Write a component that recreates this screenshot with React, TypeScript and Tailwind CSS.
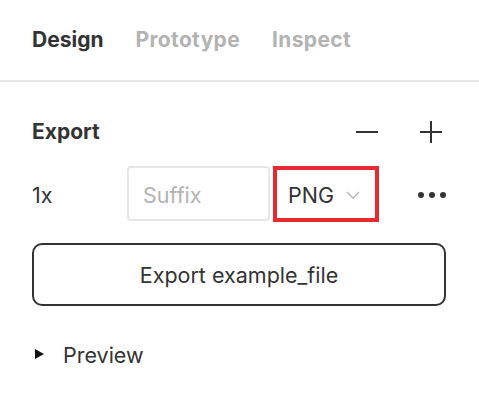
import React from 'react';

const font = { fontFamily: 'Inter, "Liberation Sans", sans-serif' };

function Minus() {
  return (
    <svg width="22" height="22" viewBox="0 0 22 22" className="text-[#333]">
      <path d="M0 11h22" stroke="currentColor" strokeWidth="2" />
    </svg>
  );
}

function Plus() {
  return (
    <svg width="22" height="22" viewBox="0 0 22 22" className="text-[#333]">
      <path d="M0 11h22M11 0v22" stroke="currentColor" strokeWidth="2" />
    </svg>
  );
}

function Chevron() {
  return (
    <svg width="14" height="8" viewBox="0 0 14 8" className="text-[#b3b3b3]">
      <path d="M1 1l6 6 6-6" fill="none" stroke="currentColor" strokeWidth="1.3" />
    </svg>
  );
}

function App() {
  return (
    <div className="h-[404px] w-[479px] bg-white text-[#333]" style={font}>
      <div className="flex h-[82px] items-center gap-[32px] border-b-2 border-[#e6e6e6] pl-[32px] text-[21px] font-bold">
        <span className="text-[#333]">Design</span>
        <span className="tracking-[0.35px] text-[#b3b3b3]">Prototype</span>
        <span className="tracking-[0.35px] text-[#b3b3b3]">Inspect</span>
      </div>

      <div className="pl-[32px] pr-[33px]">
        <div className="mt-[28px] flex h-[44px] items-center justify-between pr-[4px]">
          <span className="text-[21px] font-bold">Export</span>
          <div className="flex items-center gap-[42px]">
            <Minus />
            <Plus />
          </div>
        </div>

        <div className="mt-[12px] flex h-[55px] items-center text-[21.5px]">
          <span className="w-[95px] pt-[3px]">1x</span>
          <div className="flex h-[55px] w-[143px] items-center rounded-[4px] border-2 border-[#e6e6e6] pl-[14px] pt-[3px] text-[#b3b3b3]">
            Suffix
          </div>
          <div className="ml-[3px] flex h-[56px] w-[106px] items-center border-4 border-[#e8292f] pl-[11px]">
            <span className="pt-[3px]">PNG</span>
            <span className="ml-[12px] flex items-center pt-[2px]">
              <Chevron />
            </span>
          </div>
          <div className="ml-auto flex items-center gap-[5px] pt-[2px]">
            <span className="h-[6px] w-[6px] rounded-full bg-[#333]" />
            <span className="h-[6px] w-[6px] rounded-full bg-[#333]" />
            <span className="h-[6px] w-[6px] rounded-full bg-[#333]" />
          </div>
        </div>

        <button
          type="button"
          className="mt-[22px] flex h-[63px] w-[414px] items-center justify-center rounded-[10px] border-2 border-[#333] pt-[2px] text-[21.5px]"
        >
          Export example_file
        </button>

        <div className="mt-[33px] flex h-[30px] items-center">
          <svg width="9" height="10" viewBox="0 0 9 10" className="ml-[3px]">
            <path d="M0 0l9 5-9 5z" fill="#111" />
          </svg>
          <span className="ml-[19px] pt-[2px] text-[21.5px]">Preview</span>
        </div>
      </div>
    </div>
  );
}

export default App;
